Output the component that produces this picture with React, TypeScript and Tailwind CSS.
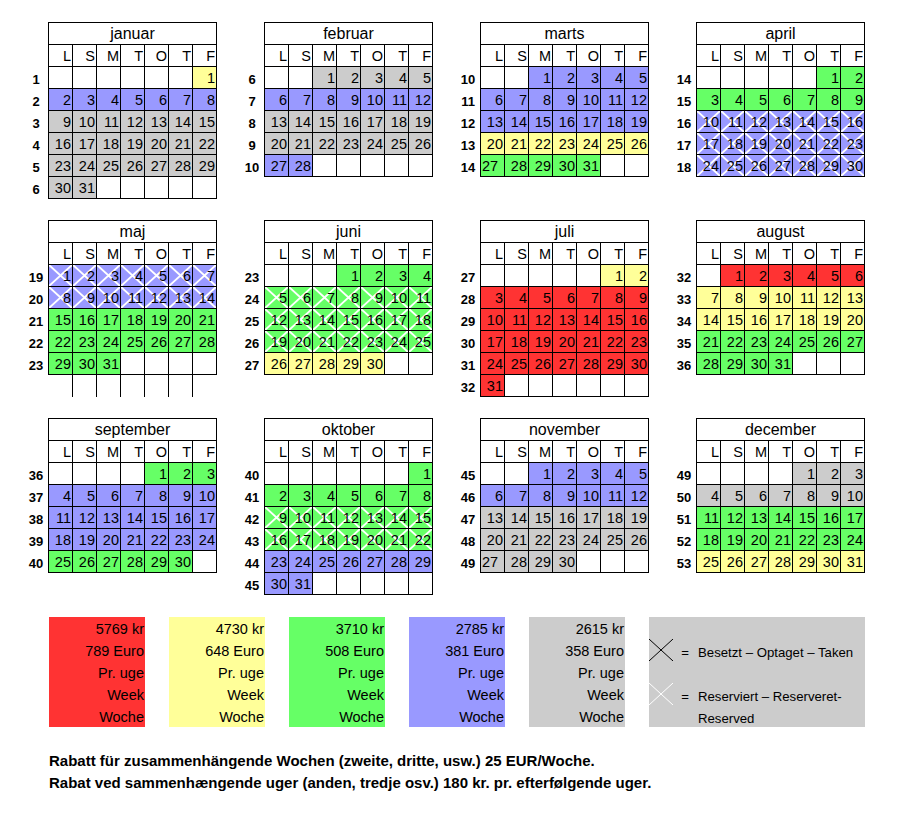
import React from "react";

type Fill = "R" | "Y" | "G" | "B" | "C";

const BG: Record<Fill, string> = {
  R: "bg-[#ff3333]",
  Y: "bg-[#ffff99]",
  G: "bg-[#66ff66]",
  B: "bg-[#9999ff]",
  C: "bg-[#cccccc]",
};

type Month = {
  name: string;
  offset: number; // empty cells before day 1 (week starts Saturday)
  days: number;
  // [week number, fill, reserved (white X)]
  weeks: [number, Fill, boolean?][];
  leftAligned?: number[];
  ghostRow?: boolean;
};

const MONTHS: Month[] = [
  {
    name: "januar",
    offset: 6,
    days: 31,
    weeks: [[1, "Y"], [2, "B"], [3, "C"], [4, "C"], [5, "C"], [6, "C"]],
  },
  {
    name: "februar",
    offset: 2,
    days: 28,
    weeks: [[6, "C"], [7, "B"], [8, "C"], [9, "C"], [10, "B"]],
  },
  {
    name: "marts",
    offset: 2,
    days: 31,
    weeks: [[10, "B"], [11, "B"], [12, "B"], [13, "Y"], [14, "G"]],
    leftAligned: [27],
  },
  {
    name: "april",
    offset: 5,
    days: 30,
    weeks: [[14, "G"], [15, "G"], [16, "B", true], [17, "B", true], [18, "B", true]],
  },
  {
    name: "maj",
    offset: 0,
    days: 31,
    weeks: [[19, "B", true], [20, "B", true], [21, "G"], [22, "G"], [23, "G"]],
    ghostRow: true,
  },
  {
    name: "juni",
    offset: 3,
    days: 30,
    weeks: [[23, "G"], [24, "G", true], [25, "G", true], [26, "G", true], [27, "Y"]],
  },
  {
    name: "juli",
    offset: 5,
    days: 31,
    weeks: [[27, "Y"], [28, "R"], [29, "R"], [30, "R"], [31, "R"], [32, "R"]],
  },
  {
    name: "august",
    offset: 1,
    days: 31,
    weeks: [[32, "R"], [33, "Y"], [34, "Y"], [35, "G"], [36, "G"]],
  },
  {
    name: "september",
    offset: 4,
    days: 30,
    weeks: [[36, "G"], [37, "B"], [38, "B"], [39, "B"], [40, "G"]],
  },
  {
    name: "oktober",
    offset: 6,
    days: 31,
    weeks: [[40, "G"], [41, "G"], [42, "G", true], [43, "G", true], [44, "B"], [45, "B"]],
  },
  {
    name: "november",
    offset: 2,
    days: 30,
    weeks: [[45, "B"], [46, "B"], [47, "C"], [48, "C"], [49, "C"]],
    leftAligned: [27],
  },
  {
    name: "december",
    offset: 4,
    days: 31,
    weeks: [[49, "C"], [50, "C"], [51, "G"], [52, "G"], [53, "Y"]],
  },
];

const WEEKDAYS = ["L", "S", "M", "T", "O", "T", "F"];

const PRICES: { fill: Fill; kr: string; euro: string }[] = [
  { fill: "R", kr: "5769 kr", euro: "789 Euro" },
  { fill: "Y", kr: "4730 kr", euro: "648 Euro" },
  { fill: "G", kr: "3710 kr", euro: "508 Euro" },
  { fill: "B", kr: "2785 kr", euro: "381 Euro" },
  { fill: "C", kr: "2615 kr", euro: "358 Euro" },
];

function Cross({ color, width }: { color: string; width: number }) {
  return (
    <svg
      className="absolute inset-0 h-full w-full"
      viewBox="0 0 24 22"
      preserveAspectRatio="none"
    >
      <path d="M0 0L24 22M24 0L0 22" stroke={color} strokeWidth={width} fill="none" />
    </svg>
  );
}

function DayCell({
  day,
  fill,
  reserved,
  left,
}: {
  day?: number;
  fill?: Fill;
  reserved?: boolean;
  left?: boolean;
}) {
  const bg = day && fill ? BG[fill] : "bg-white";
  return (
    <div
      className={`relative flex h-[22px] w-[24px] items-end border-r border-b border-black pb-[3px] ${
        left ? "justify-start pl-[1px]" : "justify-end pr-[1px]"
      } ${bg}`}
    >
      {day && reserved && <Cross color="#ffffff" width={2} />}
      {day && <span className="relative leading-none">{day}</span>}
    </div>
  );
}

function MonthBlock({ m }: { m: Month }) {
  return (
    <div className="flex h-[198px] w-[216px]">
      {/* week numbers */}
      <div className="w-[24px] pt-[45px] text-[13px] font-bold">
        {m.weeks.map(([wk]) => (
          <div key={wk} className="flex h-[22px] items-end justify-center pb-[3px] leading-none">
            {wk}
          </div>
        ))}
      </div>

      <div className="w-[169px]">
        <div className="border-t border-l border-black">
          <div className="flex h-[22px] items-center justify-center border-r border-b border-black text-[16px] leading-none">
            {m.name}
          </div>
          <div className="flex">
            {WEEKDAYS.map((d, i) => (
              <div
                key={i}
                className="flex h-[22px] w-[24px] items-end justify-end border-r border-b border-black pr-[1px] pb-[3px] leading-none"
              >
                {d}
              </div>
            ))}
          </div>
          {m.weeks.map(([wk, fill, reserved], r) => (
            <div key={wk} className="flex">
              {Array.from({ length: 7 }, (_, c) => {
                const day = r * 7 + c - m.offset + 1;
                const valid = day >= 1 && day <= m.days;
                return (
                  <DayCell
                    key={c}
                    day={valid ? day : undefined}
                    fill={fill}
                    reserved={reserved}
                    left={valid && m.leftAligned?.includes(day)}
                  />
                );
              })}
            </div>
          ))}
        </div>
        {m.ghostRow && (
          <div className="flex pl-[1px]">
            {Array.from({ length: 7 }, (_, c) => (
              <div
                key={c}
                className={`h-[22px] w-[24px] ${c < 6 ? "border-r border-black" : ""}`}
              />
            ))}
          </div>
        )}
      </div>
    </div>
  );
}

function LegendRow({ children }: { children?: React.ReactNode }) {
  return (
    <div className="flex h-[22px] items-end justify-end pr-[1px] pb-[3px] leading-none">
      {children}
    </div>
  );
}

export default function App() {
  return (
    <div className="min-h-screen bg-white pt-[22px] pl-[24px] font-['Liberation_Sans',Arial,sans-serif] text-[14.5px] text-black">
      <div className="grid grid-cols-[repeat(4,216px)]">
        {MONTHS.map((m) => (
          <MonthBlock key={m.name} m={m} />
        ))}
      </div>

      {/* price legend */}
      <div className="mt-[1px] flex gap-[24px] pl-[25px]">
        {PRICES.map((p) => (
          <div key={p.kr} className={`h-[110px] w-[96px] ${BG[p.fill]}`}>
            <LegendRow>{p.kr}</LegendRow>
            <LegendRow>{p.euro}</LegendRow>
            <LegendRow>Pr. uge</LegendRow>
            <LegendRow>Week</LegendRow>
            <LegendRow>Woche</LegendRow>
          </div>
        ))}
        <div className="h-[110px] w-[216px] bg-[#cccccc] text-[13.2px]">
          <div className="h-[22px]" />
          <div className="flex h-[22px]">
            <div className="relative w-[24px]">
              <Cross color="#000000" width={1} />
            </div>
            <div className="flex w-[24px] items-end justify-center pb-[2px] leading-none">=</div>
            <div className="flex items-end pl-[1px] pb-[2px] leading-none">
              Besetzt – Optaget – Taken
            </div>
          </div>
          <div className="h-[22px]" />
          <div className="flex h-[22px]">
            <div className="relative w-[24px]">
              <Cross color="#ffffff" width={1} />
            </div>
            <div className="flex w-[24px] items-end justify-center pb-[2px] leading-none">=</div>
            <div className="flex items-end pl-[1px] pb-[2px] leading-none">
              Reserviert – Reserveret-
            </div>
          </div>
          <div className="flex h-[22px] pl-[49px]">
            <div className="flex items-end pb-[2px] leading-none">Reserved</div>
          </div>
        </div>
      </div>

      {/* discounts */}
      <div className="mt-[23px] pl-[25px] text-[15px] font-bold">
        <div className="h-[22px] leading-[22px]">
          Rabatt für zusammenhängende Wochen (zweite, dritte, usw.) 25 EUR/Woche.
        </div>
        <div className="h-[22px] leading-[22px]">
          Rabat ved sammenhængende uger (anden, tredje osv.) 180 kr. pr. efterfølgende uger.
        </div>
      </div>
    </div>
  );
}
